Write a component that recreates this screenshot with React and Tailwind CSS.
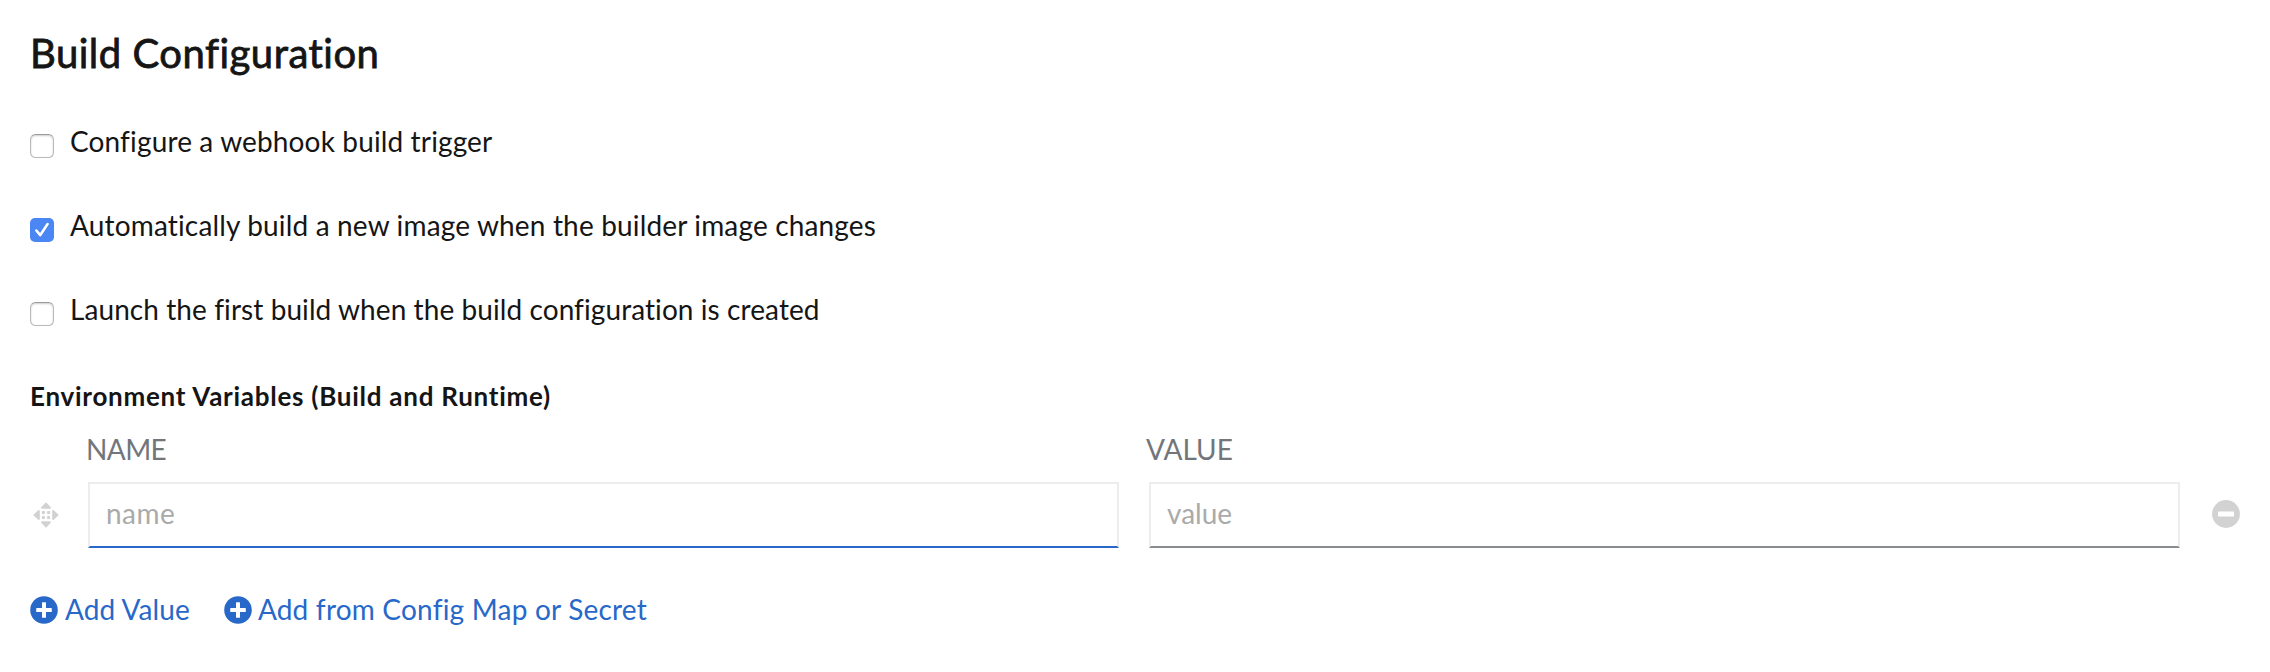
function Checkbox({ checked }) {
  if (checked) {
    return (
      <svg className="mt-3.5 size-6 shrink-0" viewBox="0 0 24 24" fill="none">
        <rect width="24" height="24" rx="5" fill="#4a86f4" />
        <path d="M6.4 13.4 10.2 18 17.6 6.8" stroke="#2f62c4" strokeOpacity=".5" strokeWidth="2.4" strokeLinecap="round" strokeLinejoin="round" />
        <path d="M6.4 12.6 10.2 17.2 17.6 6" stroke="#fff" strokeWidth="2.6" strokeLinecap="round" strokeLinejoin="round" />
      </svg>
    );
  }
  return (
    <span className="mt-3.5 size-6 shrink-0 rounded-[5.5px] border border-[#b9b9b9] border-t-[#9c9c9c] bg-white shadow-[inset_0_1px_2px_rgba(0,0,0,0.2)]" />
  );
}

function CheckRow({ checked, label, tracking }) {
  return (
    <label className="flex h-[42px] items-start gap-4">
      <Checkbox checked={checked} />
      <span className={`leading-[42px] ${tracking}`}>{label}</span>
    </label>
  );
}

function DragIcon() {
  return (
    <svg className="h-[26px] w-[26px]" viewBox="0 0 26 26" fill="#d2d2d2">
      <path d="M13 0.2 17.8 5.2Q18.3 6.8 16.8 6.8H9.2Q7.7 6.8 8.2 5.2Z" />
      <path d="M13 25.8 17.8 20.8Q18.3 19.2 16.8 19.2H9.2Q7.7 19.2 8.2 20.8Z" />
      <path d="M0.2 13 5.2 8.2Q6.8 7.7 6.8 9.2V16.8Q6.8 18.3 5.2 17.8Z" />
      <path d="M25.8 13 20.8 8.2Q19.2 7.7 19.2 9.2V16.8Q19.2 18.3 20.8 17.8Z" />
      <circle cx="10.4" cy="10.5" r="1.7" />
      <circle cx="15.6" cy="10.5" r="1.7" />
      <circle cx="10.4" cy="15.5" r="1.7" />
      <circle cx="15.6" cy="15.5" r="1.7" />
    </svg>
  );
}

function PlusCircle() {
  return (
    <svg className="size-7 shrink-0" viewBox="0 0 28 28">
      <circle cx="14" cy="14" r="13.8" fill="#2868c8" />
      <path d="M12.6 6.2h2.8q.6 0 .6.6V12h5.2q.6 0 .6.6v2.8q0 .6-.6.6H16v5.2q0 .6-.6.6h-2.8q-.6 0-.6-.6V16H6.800q-.6 0-.6-.6v-2.8q0-.6.6-.6H12V6.800q0-.6.6-.6Z" fill="#fff" />
    </svg>
  );
}

function MinusCircle() {
  return (
    <svg className="size-7" viewBox="0 0 28 28">
      <circle cx="14" cy="14" r="13.9" fill="#d2d2d2" />
      <rect x="6" y="11.600" width="16" height="4.800" rx=".7" fill="#fff" />
    </svg>
  );
}

const inputBase =
  "h-[66px] w-[1031px] border-2 border-[#ededed] bg-white px-4 pb-1 text-[28px] outline-none placeholder:text-[#aaaaaa] placeholder:opacity-100";

export default function App() {
  return (
    <main className="min-h-[672px] w-full bg-white pl-[30px] pt-[27px] font-['Lato','Open_Sans',sans-serif] text-[28px] text-[#151515]">
      <h2 className="text-[40px] font-normal leading-[52px] tracking-[0.5px] [-webkit-text-stroke:0.8px_#151515]">
        Build Configuration
      </h2>

      <div className="mt-[41px] flex flex-col gap-[42px]">
        <CheckRow label="Configure a webhook build trigger" tracking="tracking-[0.14px]" />
        <CheckRow checked label="Automatically build a new image when the builder image changes" tracking="tracking-[0.16px]" />
        <CheckRow label="Launch the first build when the build configuration is created" tracking="tracking-[0.08px]" />
      </div>

      <h3 className="mt-[46px] text-[26px] font-bold leading-10 tracking-[0.74px]">
        Environment Variables (Build and Runtime)
      </h3>

      <div className="mt-3 flex pl-14 leading-[42px] text-[#72767b]">
        <span className="w-[1060px] tracking-[-0.6px]">NAME</span>
        <span>VALUE</span>
      </div>

      <div className="mt-3 flex items-center">
        <div className="w-[58px] pl-[3px]">
          <DragIcon />
        </div>
        <input className={`${inputBase} border-b-[#2868c8] tracking-[0.5px]`} placeholder="name" />
        <input className={`${inputBase} ml-[30px] border-b-[#8a8d90]`} placeholder="value" />
        <div className="-mt-0.5 ml-8">
          <MinusCircle />
        </div>
      </div>

      <div className="mt-10 flex items-start gap-[34px] leading-[42px] text-[#2868c8]">
        <button className="flex items-start gap-[7px]">
          <span className="pt-2"><PlusCircle /></span>
          <span className="tracking-[0.1px]">Add Value</span>
        </button>
        <button className="flex items-start gap-[6px]">
          <span className="pt-2"><PlusCircle /></span>
          <span className="tracking-[0.2px]">Add from Config Map or Secret</span>
        </button>
      </div>
    </main>
  );
}
